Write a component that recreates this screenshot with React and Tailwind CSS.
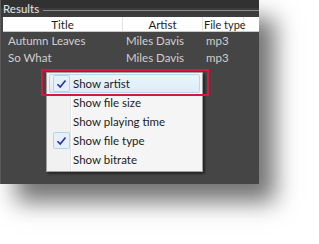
import React from "react";

const font = { fontFamily: 'Lato, "Noto Sans", sans-serif' };

const rows = [
  { title: "Autumn Leaves", artist: "Miles Davis", type: "mp3" },
  { title: "So What", artist: "Miles Davis", type: "mp3" },
];

const menuItems = [
  { label: "Show artist", checked: true, active: true },
  { label: "Show file size" },
  { label: "Show playing time" },
  { label: "Show file type", checked: true },
  { label: "Show bitrate" },
];

function Check() {
  return (
    <svg width="11" height="10" viewBox="0 0 11 10">
      <path d="M1.5 5.2 L4.2 8 L9.5 1.5" fill="none" stroke="#2a2fa8" strokeWidth="1.6" />
    </svg>
  );
}

export default function App() {
  return (
    <div className="w-[319px] h-[244px] bg-white overflow-hidden text-[11.5px] whitespace-nowrap" style={font}>
      <div className="relative w-[259px] h-[184px] bg-[#454545] border-l border-[#5a5a5a] shadow-[16px_18px_22px_rgba(0,0,0,0.55)]">
        {/* Group header */}
        <div className="flex items-center h-[17px] bg-[linear-gradient(#313131_0_8px,#3c3c3c_8px)]">
          <span className="px-[2px] leading-none text-[#e4e4e4] mt-[1px]">Results</span>
          <div className="flex-1 h-px bg-[#8c8c8c] ml-[2px] mt-[3px]" />
        </div>

        {/* List header */}
        <div className="ml-[2px] flex h-[15px] bg-white border-b border-[#c9c9c9] text-[#1e1e1e] leading-[15px]">
          <div className="w-[120px] text-center border-r border-[#e2e2e2]">Title</div>
          <div className="w-[80px] text-center border-r border-[#e2e2e2]">Artist</div>
          <div className="w-[41px] pl-[1px] border-r border-[#e2e2e2] text-[11px]">File type</div>
          <div className="flex-1" />
        </div>

        {/* Rows */}
        {rows.map((r) => (
          <div key={r.title} className="ml-[2px] flex h-[17px] items-center text-[#cfcfcf] pt-[1px]">
            <div className="w-[120px] pl-[5px]">{r.title}</div>
            <div className="w-[80px] pl-[3px]">{r.artist}</div>
            <div className="w-[41px] pl-[3px]">{r.type}</div>
          </div>
        ))}

        {/* Context menu */}
        <div className="absolute left-[45px] top-[72px] w-[157px] h-[100px] bg-[#f5f5f5] border border-[#a0a0a0] shadow-[2px_2px_2px_rgba(0,0,0,0.45)] pt-[1px]">
          <div className="absolute left-0 top-0 bottom-0 w-[23px] bg-[#f1f1f1]" />
          <div className="absolute left-[23px] top-0 bottom-0 w-px bg-[#e2e3e3]" />
          <div className="absolute left-[24px] top-0 bottom-0 w-px bg-white" />
          {menuItems.map((m) => (
            <div
              key={m.label}
              className={
                m.active
                  ? "relative mx-[2px] flex items-center h-[19px] rounded-[2px] border border-[#b4d9f0] bg-[linear-gradient(#eaf5fc,#dcedf8)]"
                  : "relative mx-[2px] flex items-center h-[19px] border border-transparent"
              }
            >
              <div className="w-[22px] h-full flex items-center justify-center">
                {m.checked && (
                  <div className="w-[17px] h-[17px] rounded-[2px] border border-[#b4d4ec] bg-[#e6f0fa] flex items-center justify-center">
                    <Check />
                  </div>
                )}
              </div>
              <span className="ml-[1px] text-[#1c1c1c] leading-none">{m.label}</span>
            </div>
          ))}
        </div>

        {/* Highlight marker */}
        <div className="absolute left-[40px] top-[69px] w-[168px] h-[27px] border-2 border-[#d6173f]" />
      </div>
    </div>
  );
}
